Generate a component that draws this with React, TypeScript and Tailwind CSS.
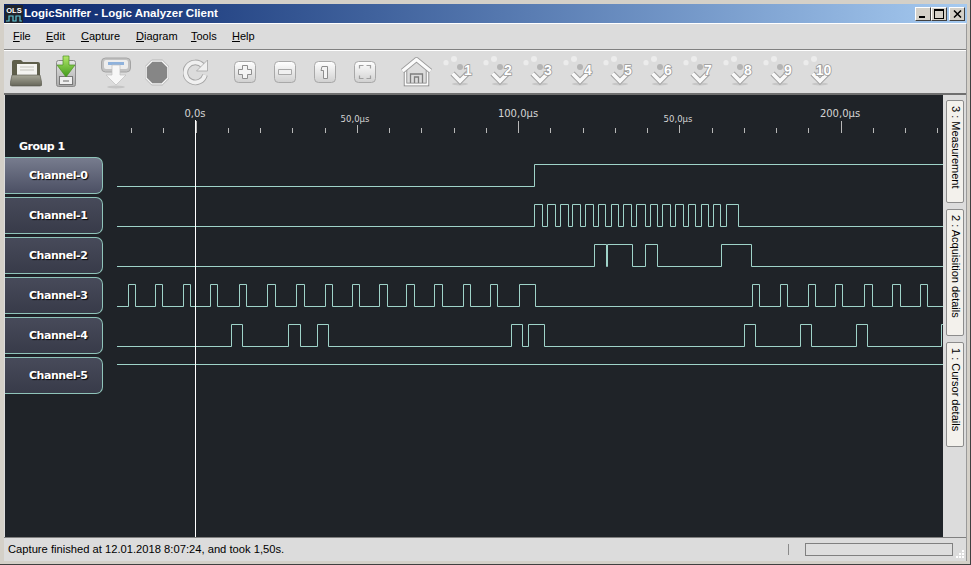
import React from 'react';

// ======================================
// WAVE DATA (x of every level change)
// ======================================

const LEFT = 117;
const RIGHT = 943;

const channels = [
  { name: 'Channel-0', low: 186.5, high: 164.5, edges: [534.3] },
  {
    name: 'Channel-1',
    low: 226.5,
    high: 204.5,
    edges: [
      534.3, 542.3, 547, 555.3, 560.3, 568, 572.3, 580.3, 585.3, 593.3, 598.3, 605.7, 611, 618.3, 623.3, 631,
      636.7, 645, 650, 657.7, 662.7, 670.3, 675, 683, 688, 695.3, 701, 708.7, 713.3, 720.7, 726.7, 738.3,
    ],
  },
  {
    name: 'Channel-2',
    low: 266.5,
    high: 244.5,
    edges: [594.3, 606.3, 607.3, 632.3, 645.3, 657.3, 721.3, 751.3],
  },
  {
    name: 'Channel-3',
    low: 306.5,
    high: 284.5,
    edges: [
      128.3, 135.7, 155.3, 162.3, 183.3, 190.3, 210.3, 217.3, 239.3, 246.3, 267.7, 275, 296.3, 304, 325.3, 332.3,
      352.7, 359.3, 379.7, 387.3, 406.3, 414.3, 434.3, 442.3, 463.7, 470.3, 490.3, 497.3, 519.3, 535.3, 752.3,
      759.3, 780.3, 787.3, 808.3, 815.3, 835.3, 842.3, 864.3, 872.3, 892.3, 900.3, 920.3, 927.3,
    ],
  },
  {
    name: 'Channel-4',
    low: 346.5,
    high: 324.5,
    edges: [
      231.7, 242.3, 288.3, 300.3, 317.3, 328.3, 511.3, 522.3, 528.3, 544.3, 744.3, 755.7, 800.3, 811.7, 856.3,
      867.7, 941.3,
    ],
  },
  { name: 'Channel-5', low: 364.5, high: 364.5, edges: [] as number[] },
];

const wavePath = (low: number, high: number, edges: number[]) => {
  let d = `M${LEFT} ${low}`;
  let level = low;

  edges.forEach((edge) => {
    const x = Math.floor(edge) + 0.5;
    level = level === low ? high : low;
    d += `H${x}V${level}`;
  });

  return `${d}H${RIGHT}`;
};

const ticks = Array.from({ length: 26 }, (_, i) => i);

// ======================================
// TOOLBAR ICONS
// ======================================

function FolderIcon() {
  return (
    <svg className="ml-[6px]" width="32" height="36" viewBox="10 54 32 36">
      <defs>
        <linearGradient id="folderFront" x1="0" y1="0" x2="0" y2="1">
          <stop offset="0" stopColor="#a8a898" />
          <stop offset="1" stopColor="#66665a" />
        </linearGradient>
      </defs>
      <path d="M12 62q0-2 2-2h7l2 2h15q2 0 2 2v14H12z" fill="#5f5f4b" />
      <path d="M17 64h20v13H17z" fill="#f4f4f0" />
      <path d="M20 67h14M20 70h14" stroke="#c4c4bc" />
      <path d="M12 75h28l2 9q0 2-2 2H12q-2 0-2-2z" fill="url(#folderFront)" stroke="#55554a" strokeWidth="0.6" />
    </svg>
  );
}

function DownloadIcon() {
  return (
    <svg className="ml-[13px]" width="22" height="36" viewBox="55 54 22 36">
      <defs>
        <linearGradient id="cabinet" x1="0" y1="0" x2="0" y2="1">
          <stop offset="0" stopColor="#e6e6e6" />
          <stop offset="1" stopColor="#a9a9a9" />
        </linearGradient>
        <linearGradient id="arrowGreen" x1="0" y1="0" x2="0" y2="1">
          <stop offset="0" stopColor="#b4e86a" />
          <stop offset="1" stopColor="#3f9a1a" />
        </linearGradient>
      </defs>
      <rect x="56.5" y="60.5" width="19" height="26" rx="2" fill="url(#cabinet)" stroke="#8b8b8b" />
      <rect x="59.5" y="76.5" width="13" height="8" fill="#efefef" stroke="#777" />
      <path d="M63 80h6v2h-6z" fill="#aaa" />
      <path d="M63 56h6v9h6l-9 12-9-12h6z" fill="url(#arrowGreen)" stroke="#4c8f23" strokeWidth="0.7" />
    </svg>
  );
}

function CaptureIcon() {
  return (
    <svg className="ml-[24px]" width="30" height="36" viewBox="101 54 30 36">
      <rect x="101.5" y="58" width="29" height="14" rx="4" fill="#c2c2c2" stroke="#a4a4a4" />
      <rect x="104" y="60" width="24" height="9" rx="2" fill="#ededed" />
      <rect x="108" y="62" width="16" height="3" fill="#8fb2dc" />
      <path d="M112 65h8v10h6l-10 10-10-10h6z" fill="#f7f7f7" stroke="#bdbdbd" strokeWidth="0.7" />
      <ellipse cx="116" cy="87" rx="9" ry="1.5" fill="#c4c4c4" />
    </svg>
  );
}

function StopIcon() {
  return (
    <svg className="ml-[14px]" width="24" height="36" viewBox="145 54 24 36">
      <path
        d="M152 61h10l6 6v11l-6 6h-10l-6-6V67z"
        fill="#868686"
        stroke="#f6f6f6"
        strokeWidth="1.6"
      />
      <path d="M151.7 60h10.6l6.7 6.7v11.6l-6.7 6.7h-10.6l-6.7-6.7V66.7z" fill="none" stroke="#a8a8a8" strokeWidth="0.7" />
    </svg>
  );
}

function RefreshIcon() {
  return (
    <svg className="ml-[14px]" width="25" height="36" viewBox="183 54 25 36">
      <path d="M203 66a10 10 0 1 0 2 9" fill="none" stroke="#a4a4a4" strokeWidth="5.6" />
      <path d="M203 66a10 10 0 1 0 2 9" fill="none" stroke="#f0f0f0" strokeWidth="3.8" />
      <path d="M207.5 60v11h-11z" fill="#f0f0f0" stroke="#a4a4a4" strokeWidth="0.8" />
    </svg>
  );
}

function KeyIcon({ id, children }: { id: string; children: React.ReactNode }) {
  return (
    <svg width="24" height="36" viewBox="0 0 24 36">
      <defs>
        <linearGradient id={id} x1="0" y1="0" x2="0" y2="1">
          <stop offset="0" stopColor="#ffffff" />
          <stop offset="1" stopColor="#d0d0d0" />
        </linearGradient>
      </defs>
      <rect x="1.5" y="7.5" width="21" height="21" rx="4" fill={`url(#${id})`} stroke="#a8a8a8" />
      {children}
    </svg>
  );
}

function HomeIcon() {
  return (
    <svg className="ml-[24px]" width="32" height="36" viewBox="401 54 32 36">
      <path d="M405.5 70v14.5h22V70" fill="none" stroke="#7e7e7e" strokeWidth="3.4" />
      <path d="M405.5 70v14.5h22V70" fill="none" stroke="#fbfbfb" strokeWidth="1.8" />
      <path d="M410.5 83v-9h12v9M414.5 83v-6h4v6" fill="none" stroke="#7e7e7e" strokeWidth="1.3" />
      <path d="M402.5 71l14-11.5 14 11.5" fill="none" stroke="#9a9a9a" strokeWidth="5" strokeLinejoin="round" />
      <path d="M402.5 71l14-11.5 14 11.5" fill="none" stroke="#fbfbfb" strokeWidth="3.4" strokeLinejoin="round" />
    </svg>
  );
}

function MarkerIcon({ n }: { n: number }) {
  return (
    <svg width="40" height="36" viewBox="0 0 40 36" className="shrink-0">
      <ellipse cx="20" cy="30" rx="8" ry="1.5" fill="#c6c6c6" />
      <circle cx="6" cy="8.7" r="2.6" fill="#ececec" />
      <circle cx="14" cy="5" r="3" fill="#ececec" />
      <circle cx="20" cy="13" r="3" fill="#b4b4b4" />
      <path d="M12.5 19.5l7.5 7.5 8-8" fill="none" stroke="#9c9c9c" strokeWidth="5.6" />
      <path d="M12.5 19.5l7.5 7.5 8-8" fill="none" stroke="#f9f9f9" strokeWidth="3.8" />
      <text
        x={n === 10 ? 23.5 : 28}
        y="20.5"
        textAnchor="middle"
        fontFamily="'Liberation Sans', sans-serif"
        fontSize="14"
        fontWeight="700"
        fill="#ffffff"
        stroke="#9a9a9a"
        strokeWidth="1.6"
        paintOrder="stroke"
      >
        {n}
      </text>
    </svg>
  );
}

// ======================================
// WINDOW CAPTION BUTTON
// ======================================

function CaptionButton({ children }: { children: React.ReactNode }) {
  return (
    <div className="flex h-[14px] w-[16px] items-center justify-center border border-t-white border-l-white border-r-[#404040] border-b-[#404040] bg-[#d4d0c8]">
      {children}
    </div>
  );
}

// ======================================
// COMPONENT
// ======================================

export default function App() {
  return (
    <div className="flex h-[565px] w-[971px] flex-col overflow-hidden border-b border-r border-[#404040] bg-[#d4d0c8] pb-[3px] pl-[4px] pr-[3px] pt-[4px] font-['Liberation_Sans',sans-serif] text-[11px] text-black">

      {/* TITLE BAR */}
      <div className="flex h-[19px] shrink-0 items-center bg-gradient-to-r from-[#0a246a] to-[#a6caf0] pr-[2px]">
        <svg width="18" height="18" viewBox="0 0 18 18" className="ml-[1px] shrink-0">
          <rect width="18" height="18" fill="#20242c" />
          <text x="9" y="8" textAnchor="middle" fontFamily="'Liberation Sans', sans-serif" fontSize="7.5" fontWeight="700" fill="#ffffff">
            OLS
          </text>
          <path d="M1 16h3v-5h4v5h3v-5h4v5h2" fill="none" stroke="#5fc8d8" strokeWidth="1.2" />
        </svg>
        <span className="ml-[1px] flex-1 text-[11.5px] font-bold text-white">LogicSniffer - Logic Analyzer Client</span>
        <CaptionButton>
          <span className="mt-[7px] mr-[3px] h-[2px] w-[6px] bg-black" />
        </CaptionButton>
        <CaptionButton>
          <span className="h-[10px] w-[10px] border border-t-2 border-black" />
        </CaptionButton>
        <div className="w-[2px]" />
        <CaptionButton>
          <svg width="9" height="8" viewBox="0 0 9 8">
            <path d="M1 0.5l7 7M8 0.5l-7 7" stroke="#000" strokeWidth="1.5" />
          </svg>
        </CaptionButton>
      </div>

      {/* BODY */}
      <div className="flex min-h-0 flex-1 flex-col border-t border-r border-t-white border-r-[#9a9a9a] bg-[#dcdcdc]">

        {/* MENU */}
        <div className="flex h-[26px] shrink-0 items-center border-b border-[#808080] pl-[9px]">
          <span className="w-[33px]"><span className="underline">F</span>ile</span>
          <span className="w-[35px]"><span className="underline">E</span>dit</span>
          <span className="w-[55px]"><span className="underline">C</span>apture</span>
          <span className="w-[55px]"><span className="underline">D</span>iagram</span>
          <span className="w-[41px]"><span className="underline">T</span>ools</span>
          <span><span className="underline">H</span>elp</span>
        </div>

        {/* TOOLBAR */}
        <div className="flex h-[45px] shrink-0 items-start border-t border-t-white border-b-2 border-b-[#6f6f6f] pt-[3px]">
          <FolderIcon />
          <DownloadIcon />
          <CaptureIcon />
          <StopIcon />
          <RefreshIcon />
          <div className="ml-[25px]">
            <KeyIcon id="keyPlus">
              <path d="M9.5 11.5h5v4h4v5h-4v4h-5v-4h-4v-5h4z" fill="#f4f4f4" stroke="#8e8e8e" />
            </KeyIcon>
          </div>
          <div className="ml-[16px]">
            <KeyIcon id="keyMinus">
              <path d="M5.5 15.5h13v5h-13z" fill="#f0f0f0" stroke="#a8a8a8" />
            </KeyIcon>
          </div>
          <div className="ml-[16px]">
            <KeyIcon id="keyOne">
              <path d="M9 12.5h5.5v12h-4v-8H8z" fill="#f4f4f4" stroke="#8e8e8e" />
            </KeyIcon>
          </div>
          <div className="ml-[16px]">
            <KeyIcon id="keyFit">
              <path d="M6.5 14.5v-3h4M13.5 11.5h4v3M6.5 21.5v3h4M13.5 24.5h4v-3" fill="none" stroke="#a0a0a0" strokeWidth="1.2" />
            </KeyIcon>
          </div>
          <HomeIcon />
          <div className="ml-[7px] flex">
            {[1, 2, 3, 4, 5, 6, 7, 8, 9, 10].map((n) => (
              <MarkerIcon key={n} n={n} />
            ))}
          </div>
        </div>

        {/* MIDDLE */}
        <div className="flex min-h-0 flex-1 pl-[1px]">

          {/* DIAGRAM */}
          <div className="flex w-[938px] shrink-0 bg-[#1f2328]">

            {/* LABELS */}
            <div className="w-[98px] shrink-0 pt-[42px]">
              <div className="h-[20px] pl-[14px] pt-[1px] text-[11px] font-bold leading-[18px] tracking-[-0.5px] text-white [font-family:'DejaVu_Sans',sans-serif]">
                Group 1
              </div>
              {channels.map((channel, i) => (
                <div
                  key={channel.name}
                  className={`mb-[3px] flex h-[37px] items-center rounded-r-[7px] border border-l-0 border-[#8fc4ba] pl-[24px] pt-[2px] text-[11px] font-bold tracking-[-0.45px] text-white [font-family:'DejaVu_Sans',sans-serif] [text-shadow:1px_1px_1px_#000] ${
                    i === 0
                      ? 'bg-gradient-to-b from-[#777c8e] to-[#4c5064]'
                      : 'bg-gradient-to-b from-[#474a5a] to-[#383b49]'
                  }`}
                >
                  {channel.name}
                </div>
              ))}
            </div>

            {/* WAVES */}
            <svg width="840" height="443" viewBox="103 95 840 443" className="shrink-0">
              {ticks.map((i) => {
                const x = Math.round(131 + i * 32.25) + 0.5;
                const big = i % 10 === 2;
                const mid = i % 10 === 7;
                return (
                  <line
                    key={i}
                    x1={x}
                    x2={x}
                    y1={big ? 121 : mid ? 125 : 128}
                    y2="133"
                    stroke="#b8b8b8"
                  />
                );
              })}
              <g fontFamily="'DejaVu Sans', sans-serif" fill="#d4d4d4" textAnchor="middle">
                <text x="195" y="117" fontSize="10">0,0s</text>
                <text x="355" y="122" fontSize="8.5">50,0µs</text>
                <text x="518" y="117" fontSize="10">100,0µs</text>
                <text x="678" y="122" fontSize="8.5">50,0µs</text>
                <text x="840" y="117" fontSize="10">200,0µs</text>
              </g>
              {channels.map((channel) => (
                <path
                  key={channel.name}
                  d={wavePath(channel.low, channel.high, channel.edges)}
                  fill="none"
                  stroke="#9fd3c9"
                />
              ))}
              <line x1="195.5" x2="195.5" y1="120" y2="538" stroke="#ffffff" />
            </svg>
          </div>

          {/* SIDE TABS */}
          <div className="flex w-[22px] shrink-0 flex-col items-start gap-[6px] pl-[3px] pt-[5px]">
            <div className="h-[103px] w-[18px] rounded-[2px] border border-[#8c8c8c] bg-[#f3f1ec] pt-[5px] pl-[1px] leading-[15px] [writing-mode:vertical-rl]">
              3 : Measurement
            </div>
            <div className="h-[127px] w-[18px] rounded-[2px] border border-[#8c8c8c] bg-[#f3f1ec] pt-[5px] pl-[1px] leading-[15px] [writing-mode:vertical-rl]">
              2 : Acquisition details
            </div>
            <div className="h-[105px] w-[18px] rounded-[2px] border border-[#8c8c8c] bg-[#f3f1ec] pt-[5px] pl-[1px] leading-[15px] [writing-mode:vertical-rl]">
              1 : Cursor details
            </div>
          </div>
        </div>

        {/* STATUS BAR */}
        <div className="flex h-[24px] shrink-0 items-center border-t border-[#808080] pl-[4px] text-[11.2px]">
          <span className="flex-1">Capture finished at 12.01.2018 8:07:24, and took 1,50s.</span>
          <span className="h-[11px] w-px bg-[#8a8a8a]" />
          <div className="ml-[16px] h-[13px] w-[148px] border border-[#808080] bg-[#dedede]" />
          <svg width="13" height="12" viewBox="0 0 13 12" className="mt-[10px] shrink-0">
            <g fill="#ffffff">
              <rect x="9" y="1" width="2" height="2" />
              <rect x="6" y="4" width="2" height="2" />
              <rect x="9" y="4" width="2" height="2" />
              <rect x="3" y="7" width="2" height="2" />
              <rect x="6" y="7" width="2" height="2" />
              <rect x="9" y="7" width="2" height="2" />
            </g>
          </svg>
        </div>
      </div>
    </div>
  );
}
